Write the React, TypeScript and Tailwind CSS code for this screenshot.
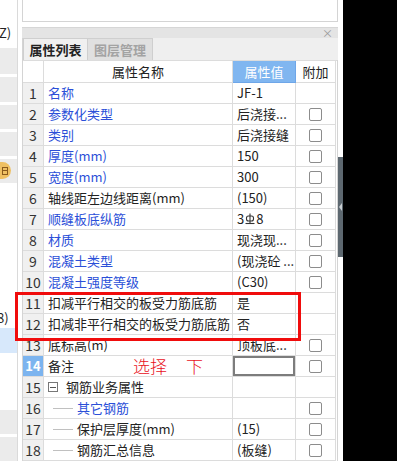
import React from "react";

type Row = {
  n: number;
  name: string;
  blue?: boolean;
  value?: React.ReactNode;
  cb: boolean;
  tree?: "root" | "leaf";
};

const Rebar = () => (
  <svg width="10" height="12" viewBox="0 0 10 12" className="inline-block align-[-1px] mx-[1px]">
    <rect x="1.5" y="3" width="7" height="5" rx="2" fill="none" stroke="#333" strokeWidth="1.1" />
    <line x1="5" y1="0.5" x2="5" y2="11" stroke="#333" strokeWidth="1.1" />
    <line x1="0.5" y1="10.5" x2="9.5" y2="10.5" stroke="#333" strokeWidth="1.1" />
  </svg>
);

const rows: Row[] = [
  { n: 1, name: "名称", blue: true, value: "JF-1", cb: false },
  { n: 2, name: "参数化类型", blue: true, value: "后浇接...", cb: true },
  { n: 3, name: "类别", blue: true, value: "后浇接缝", cb: true },
  { n: 4, name: "厚度(mm)", blue: true, value: "150", cb: true },
  { n: 5, name: "宽度(mm)", blue: true, value: "300", cb: true },
  { n: 6, name: "轴线距左边线距离(mm)", value: "(150)", cb: true },
  {
    n: 7,
    name: "顺缝板底纵筋",
    blue: true,
    value: (
      <span>
        3<Rebar />8
      </span>
    ),
    cb: true,
  },
  { n: 8, name: "材质", blue: true, value: "现浇现...", cb: true },
  { n: 9, name: "混凝土类型", blue: true, value: "(现浇砼 ...", cb: true },
  { n: 10, name: "混凝土强度等级", blue: true, value: "(C30)", cb: true },
  { n: 11, name: "扣减平行相交的板受力筋底筋", value: "是", cb: false },
  { n: 12, name: "扣减非平行相交的板受力筋底筋", value: "否", cb: false },
  { n: 13, name: "底标高(m)", value: "顶板底...", cb: true },
  { n: 14, name: "备注", value: "", cb: true },
  { n: 15, name: "钢筋业务属性", value: "", cb: false, tree: "root" },
  { n: 16, name: "其它钢筋", blue: true, value: "", cb: true, tree: "leaf" },
  { n: 17, name: "保护层厚度(mm)", value: "(15)", cb: true, tree: "leaf" },
  { n: 18, name: "钢筋汇总信息", value: "(板缝)", cb: true, tree: "leaf" },
];

const Checkbox = () => (
  <div className="w-[13px] h-[13px] border border-[#8c8c8c] rounded-[2px] bg-white" />
);

const cell = "border-r border-b border-[#dcdcdc] h-[21px] flex items-center";

export default function App() {
  return (
    <div
      className="relative w-[397px] h-[461px] overflow-hidden bg-white flex text-[#222]"
      style={{ fontFamily: '"Noto Sans CJK SC", "Noto Sans", sans-serif' }}
    >
      {/* left clipped panel */}
      <div className="w-[18px] shrink-0 border-r border-[#dadada] flex flex-col overflow-hidden text-[13px] leading-none">
        <div className="h-[48px] flex items-end pb-[9px]">
          <span className="ml-[-1px]">Z)</span>
        </div>
        <div className="h-[26px] bg-[#ebebeb]" />
        <div className="h-[3px]" />
        <div className="h-[25px] bg-[#ebebeb]" />
        <div className="h-[3px]" />
        <div className="h-[24px] bg-[#ebebeb]" />
        <div className="h-[3px]" />
        <div className="h-[24px] bg-[#ebebeb]" />
        <div className="h-[3px]" />
        <div className="h-[24px] bg-[#ebebeb] relative">
          <div className="absolute left-[-8px] top-[3px] w-[19px] h-[17px] rounded-full bg-[#efc062] flex items-center justify-end pr-[3px]">
            <div className="w-[6px] h-[8px] border border-[#8a5a1c] flex flex-col justify-center">
              <div className="h-[1px] bg-[#8a5a1c]" />
            </div>
          </div>
        </div>
        <div className="h-[123px]" />
        <div className="h-[22px] flex items-center">
          <span className="ml-[-3px]">8)</span>
        </div>
        <div className="h-[25px] bg-[#d7e8fb]" />
        <div className="h-[57px]" />
        <div className="h-[24px] bg-[#ebebeb]" />
        <div className="h-[3px]" />
        <div className="h-[24px] bg-[#ebebeb]" />
      </div>
      <div className="w-[4px] shrink-0" />

      {/* main panel */}
      <div className="w-[316px] shrink-0 flex flex-col">
        <div className="h-[24px] border-l border-r border-b border-[#d4d4d4] bg-white" />
        <div className="h-[5px]" />
        <div className="h-[11px] bg-[#e4e4e4] border-t border-[#d6d6d6] flex items-center justify-end pr-[5px]">
          <span className="text-[11px] leading-none text-[#999]">×</span>
        </div>
        <div className="h-[23px] bg-[#efefef] border-l border-[#d4d4d4] flex items-end">
          <div className="w-[65px] h-[22px] border border-b-0 border-[#cfcfcf] bg-[#f0f0f0] flex items-center justify-center text-[13px] font-bold text-[#222]">
            属性列表
          </div>
          <div className="w-[65px] h-[22px] border border-l-0 border-b-0 border-[#cfcfcf] bg-[#e0e0e0] flex items-center justify-center text-[13px] font-bold text-[#a3a3a3]">
            图层管理
          </div>
        </div>

        {/* table */}
        <div className="flex-1 flex border-l border-r border-[#d4d4d4]">
          <div className="w-[314px]">
            <div className="grid grid-cols-[21px_189px_63px_40px] border-t border-[#dcdcdc]">
              <div className="border-r border-b border-[#dcdcdc] h-[22px]" />
              <div className="border-r border-b border-[#dcdcdc] h-[22px] flex items-center justify-center text-[13px]">
                属性名称
              </div>
              <div className="border-r border-b border-[#6ea6e8] h-[22px] bg-[#80b6f0] flex items-center justify-center text-[13px] text-white">
                属性值
              </div>
              <div className="border-r border-b border-[#dcdcdc] h-[22px] flex items-center justify-center text-[13px]">
                附加
              </div>

              {rows.map((r) => (
                <React.Fragment key={r.n}>
                  <div
                    className={
                      r.n === 14
                        ? `${cell} justify-center bg-[#7cb4ef] text-white font-bold text-[13px]`
                        : `${cell} justify-center bg-[#f0f0f0] text-[#333] text-[14px]`
                    }
                  >
                    {r.n}
                  </div>
                  <div className={`${cell} relative pl-[4px] text-[13px] whitespace-nowrap`}>
                    {r.tree === "root" && (
                      <>
                        <div className="w-[10px] h-[10px] border border-[#777] bg-white flex items-center justify-center">
                          <div className="w-[6px] h-[1px] bg-[#555]" />
                        </div>
                        <span className="ml-[8px]">{r.name}</span>
                      </>
                    )}
                    {r.tree === "leaf" && (
                      <>
                        <div className="ml-[5px] w-[20px] h-[1px] bg-[#c0c0c0]" />
                        <span className={`ml-[4px] ${r.blue ? "text-[#2b4fd8]" : ""}`}>{r.name}</span>
                      </>
                    )}
                    {!r.tree && <span className={r.blue ? "text-[#2b4fd8]" : ""}>{r.name}</span>}
                    {r.n === 14 && (
                      <span className="absolute left-[89px] top-[-1px] text-[17px] leading-[22px] text-[#e8121c] font-light">
                        选择<span className="ml-[19px]">下</span>
                      </span>
                    )}
                  </div>
                  <div className={`${cell} text-[13px] whitespace-nowrap overflow-hidden ${r.n === 14 ? "" : "pl-[4px]"}`}>
                    {r.n === 14 ? (
                      <div className="w-full h-full border-2 border-[#7d7d7d] bg-white" />
                    ) : (
                      r.value
                    )}
                  </div>
                  <div className={`${cell} justify-center`}>{r.cb && <Checkbox />}</div>
                </React.Fragment>
              ))}
            </div>
          </div>
        </div>
      </div>

      {/* splitter */}
      <div className="w-[5px] shrink-0 flex flex-col">
        <div className="h-[157px]" />
        <div className="h-[100px] bg-[#5d6870] flex items-center justify-center">
          <div className="w-0 h-0 border-y-[4px] border-y-transparent border-r-[3px] border-r-[#c9ced2]" />
        </div>
      </div>

      <div className="flex-1 bg-black" />

      {/* red annotation box */}
      <div className="absolute left-[15px] top-[292px] w-[286px] h-[49px] border-[3px] border-[#f00c0c]" />
    </div>
  );
}
